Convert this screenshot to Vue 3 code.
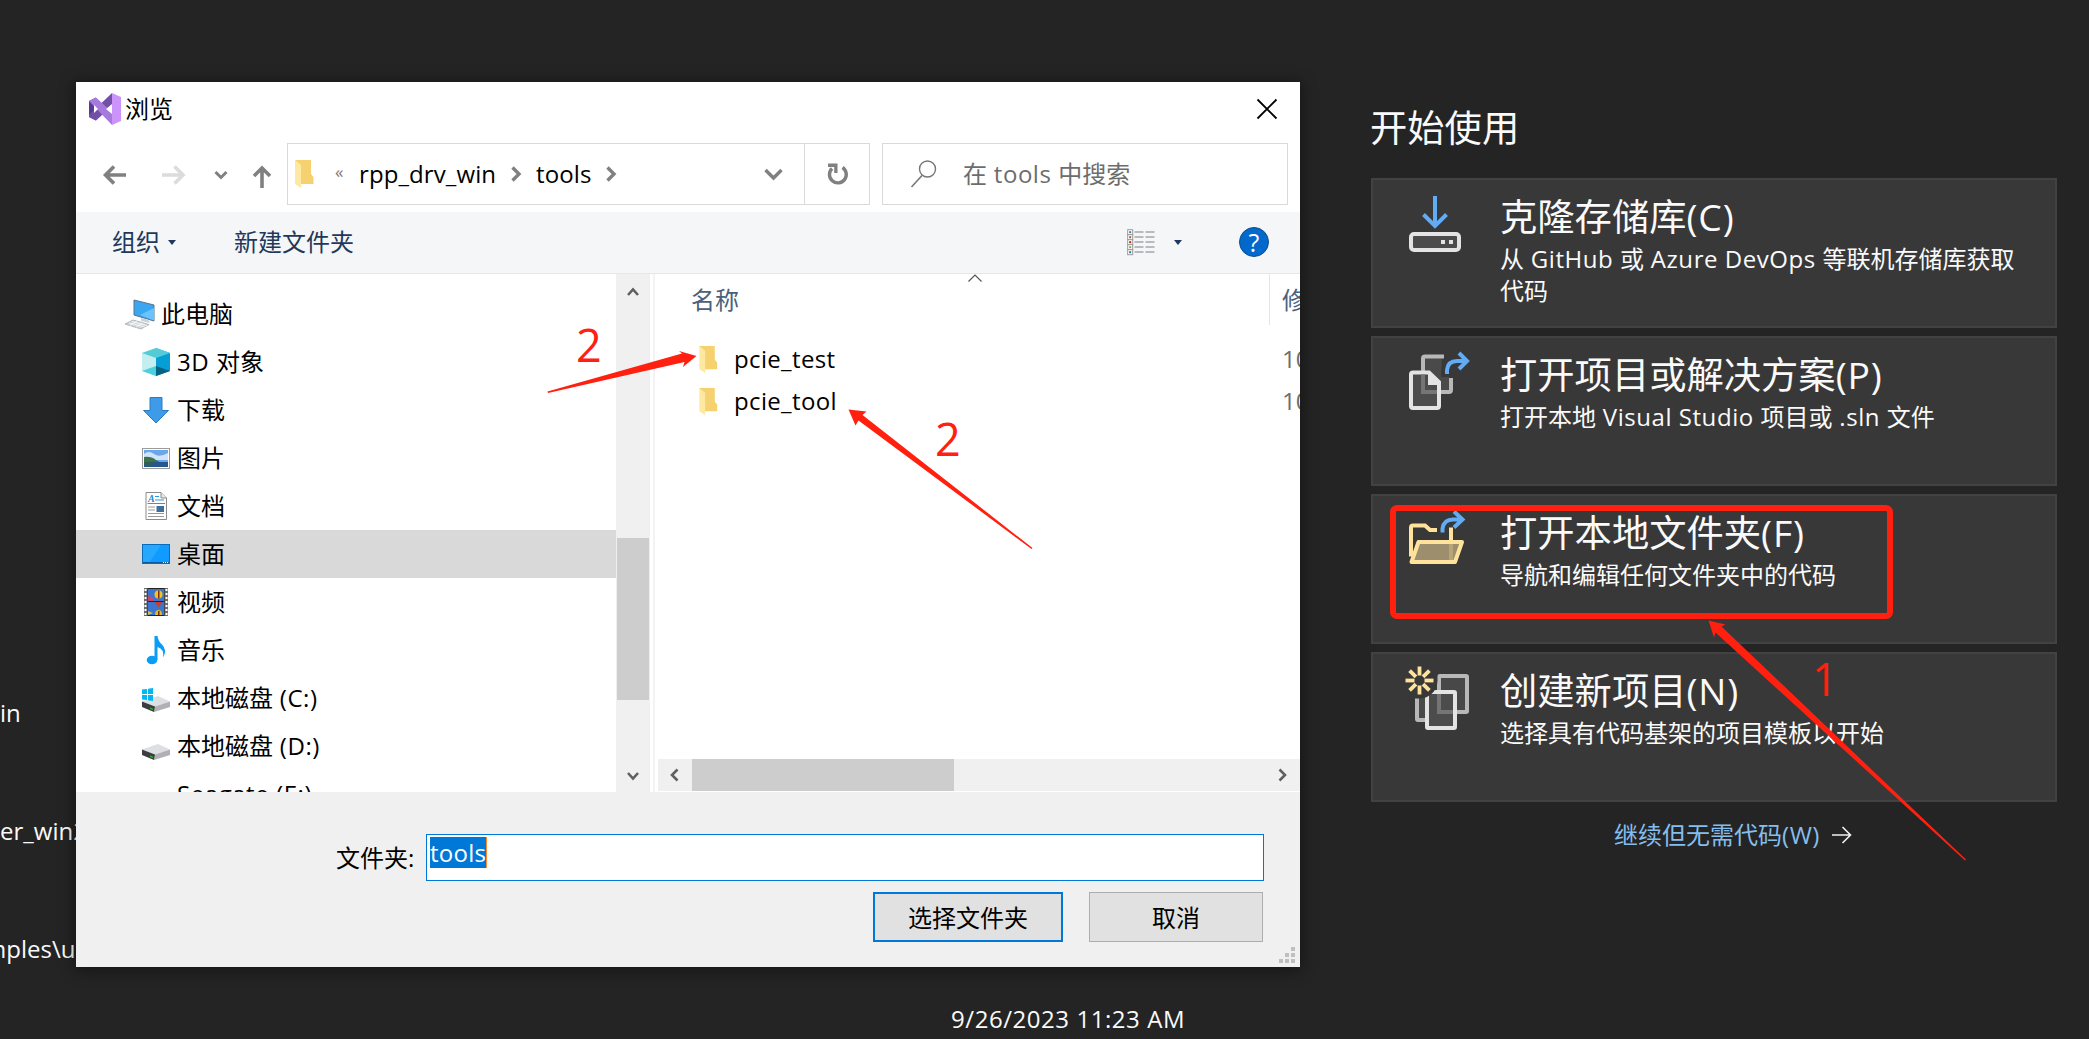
<script setup>
import { h } from 'vue'

// Splits mixed text into CJK and Latin runs so that Latin can be tracked separately.
const Mixed = (props) =>
  h(
    'span',
    { class: 'mixed' },
    props.text
      .split(/([\x20-\x7e]+)/)
      .filter(Boolean)
      .map((t) => (/[\x20-\x7e]/.test(t) ? h('span', { class: 'latin' }, t) : t))
  )
Mixed.props = ['text']

const recent = ['in', 'er_win2019', 'mples\\u']

const cards = [
  { icon: 'clone', title: '克隆存储库(C)', text: '从 GitHub 或 Azure DevOps 等联机存储库获取代码' },
  { icon: 'project', title: '打开项目或解决方案(P)', text: '打开本地 Visual Studio 项目或 .sln 文件' },
  { icon: 'folder', title: '打开本地文件夹(F)', text: '导航和编辑任何文件夹中的代码' },
  { icon: 'create', title: '创建新项目(N)', text: '选择具有代码基架的项目模板以开始' }
]

const places = [
  { icon: 'pc', name: '此电脑', root: true },
  { icon: 'cube', name: '3D 对象' },
  { icon: 'down', name: '下载' },
  { icon: 'picture', name: '图片' },
  { icon: 'doc', name: '文档' },
  { icon: 'desktop', name: '桌面', selected: true },
  { icon: 'video', name: '视频' },
  { icon: 'music', name: '音乐' },
  { icon: 'diskc', name: '本地磁盘 (C:)' },
  { icon: 'disk', name: '本地磁盘 (D:)' },
  { icon: '', name: 'Seagate (E:)' }
]

const files = ['pcie_test', 'pcie_tool']
const viewColors = ['#3d7ab8', '#b5552f', '#c11b17', '#7fa63a', '#2f6da8']
const rays = [0, 45, 90, 135, 180, 225, 270, 315]
</script>

<template>
  <div class="screen">
    <section class="recent">
      <div v-for="r in recent" :key="r" class="recent-path" :class="{ cut: r.startsWith('mples') }">{{ r }}</div>
      <div class="recent-date"><Mixed text="9/26/2023 11:23 AM" /></div>
    </section>

    <section class="start">
      <h1>开始使用</h1>
      <div class="cards">
        <div v-for="c in cards" :key="c.icon" class="card">
          <svg v-if="c.icon === 'clone'" class="card-icon" viewBox="-1 2 72 72">
            <path d="M27 4V33M15.500 22.500L27 34L38.500 22.500" fill="none" stroke="#62abf5" stroke-width="4" />
            <rect x="3" y="42" width="48" height="16" rx="3" fill="#4c4c4c" stroke="#e4e4e4" stroke-width="4" />
            <path d="M33 48h4v4h-4zM41 48h4v4h-4z" fill="#e4e4e4" />
          </svg>
          <svg v-else-if="c.icon === 'project'" class="card-icon" viewBox="-1 0 72 72">
            <path d="M17 6H34L33 25H41V38H17z" fill="#4a4a4a" />
            <path d="M36 4.500H17q-2 0-2 2V38q0 2 2 2H41q2 0 2-2V26" fill="none" stroke="#b8b8b8" stroke-width="4" />
            <path d="M3 22.500q0-2 2-2H21L31 30V54q0 2-2 2H5q-2 0-2-2z" fill="#4c4c4c" stroke="#e4e4e4" stroke-width="4" />
            <path d="M13 22.500H17V38H29V42H13z" fill="#757575" />
            <path d="M20 20L31 31V33H20z" fill="#e4e4e4" />
            <path d="M39 22V18Q40 9 49 9H58M51 1L59 9L51 17" fill="none" stroke="#62abf5" stroke-width="4" />
          </svg>
          <svg v-else-if="c.icon === 'folder'" class="card-icon" viewBox="-1 2.500 72 72">
            <path d="M3 49V20q0-2 2-2H17L22 22.500H29M43 20V34" fill="none" stroke="#ffe29b" stroke-width="4" />
            <path d="M10 35H54L48 54H4z" fill="#9d8f6d" />
            <path d="M41 35h4v19h-4z" fill="#b8a577" />
            <path d="M10.500 34.500H54L47 54.500H3.500z" fill="none" stroke="#ffe29b" stroke-width="4" stroke-linejoin="round" />
            <path d="M34.500 25V21Q36 12 45 12H54M46 4L54.500 12L46 20" fill="none" stroke="#62abf5" stroke-width="4" />
          </svg>
          <svg v-else class="card-icon" viewBox="-3 -1 72 72">
            <rect x="29" y="7" width="28" height="36" rx="1" fill="#484848" stroke="#b8b8b8" stroke-width="4" />
            <path d="M9 22H16V49H9z" fill="#4a4a4a" />
            <path d="M5.500 24V50q0 1 1 1H20" transform="translate(1.500 0)" fill="none" stroke="#b8b8b8" stroke-width="4" />
            <rect x="17" y="23" width="28" height="36" rx="1" fill="#4c4c4c" stroke="#e4e4e4" stroke-width="4" />
            <path d="M27 25H31V41H43V45H27z" fill="#757575" />
            <path d="M9.500 29.500A18 18 0 0 0 27.500 11.500V0H-8V29.500z" fill="#383838" />
            <g stroke="#ffe29b" stroke-width="3.800">
              <path v-for="a in rays" :key="a" d="M9.500 6.500V-2.500" :transform="`rotate(${a} 9.500 11.500)`" />
            </g>
          </svg>
          <div class="card-body">
            <h2><Mixed :text="c.title" /></h2>
            <p><Mixed :text="c.text" /></p>
          </div>
        </div>
      </div>
      <div class="skip">
        <Mixed text="继续但无需代码(W)" />
        <svg width="20" height="18" viewBox="0 0 20 18"><path d="M0 9H18.500M10.500 1L18.500 9L10.500 17" fill="none" stroke="#f0f0f0" stroke-width="1.600" /></svg>
      </div>
    </section>

    <section class="dialog">
      <header class="titlebar">
        <svg width="32" height="32" viewBox="0 0 32 32">
          <path d="M0 8L7 4.500L8 12L5 15.500V17L8 20L7 27.500L0 24z" fill="#5a3a92" />
          <path d="M7 27.500L23 13V0L0 22v2z" fill="#7350a8" />
          <path d="M7 4.500L26 22L23 32L0 8z" fill="#a679dc" />
          <path d="M23 0L32 4V28L23 32z" fill="#cc93fb" />
          <path d="M5 12L9 16L5 20zM23 11V21L17 16z" fill="#fff" />
        </svg>
        <span class="caption">浏览</span>
        <svg class="close" width="20" height="20" viewBox="0 0 20 20"><path d="M.500 .500L19.500 19.500M19.500 .500L.500 19.500" stroke="#000" stroke-width="1.800" /></svg>
      </header>

      <div class="navbar">
        <svg class="nav-icons" width="211" height="62" viewBox="0 0 211 62">
          <g fill="none" stroke="#808080" stroke-width="3.600">
            <path d="M50 32H29.500M38 23.500L29.500 32L38 40.500" />
            <path d="M86 32H107M98.500 23.500L107 32L98.500 40.500" stroke="#dcdcdc" />
            <path d="M139.500 29L145 34.500L150.500 29" stroke-width="3" />
            <path d="M186 45V25M178 33L186 25L194 33" />
          </g>
        </svg>
        <div class="address">
          <svg class="folder" width="19" height="28" viewBox="0 0 19 28"><path d="M0 0H16V14L18.500 17V24H5z" fill="#f5d26f" /><path d="M0 0L6 5V28L0 24z" fill="#ffe9a2" /></svg>
          <span class="more">«</span>
          <span class="crumb first">rpp_drv_win</span>
          <svg class="chev" width="10" height="16" viewBox="0 0 10 16"><path d="M1.500 1.500L8 8L1.500 14.500" /></svg>
          <span class="crumb second">tools</span>
          <svg class="chev last" width="10" height="16" viewBox="0 0 10 16"><path d="M1.500 1.500L8 8L1.500 14.500" /></svg>
          <svg class="chev history" width="19" height="13" viewBox="0 0 19 13"><path d="M1.500 2L9.500 10L17.500 2" /></svg>
          <div class="refresh">
            <svg width="22" height="24" viewBox="0 0 22 24"><path d="M15.500 5.500A8.400 8.400 0 1 1 5 6.500" fill="none" stroke="#808080" stroke-width="3.400" /><path d="M1 1.500H10.500V11H7.200V5H1z" fill="#808080" /></svg>
          </div>
        </div>
        <div class="search">
          <svg width="26" height="28" viewBox="0 0 26 28"><circle cx="16.500" cy="9" r="8" fill="none" stroke="#777" stroke-width="1.400" /><path d="M11 15.500L.500 27" stroke="#777" stroke-width="1.600" /></svg>
          <Mixed class="hint" text="在 tools 中搜索" />
        </div>
      </div>

      <div class="toolbar">
        <span class="organize">组织</span>
        <svg width="8" height="5" viewBox="0 0 8 5"><path d="M0 0H8L4 5z" fill="#1e395b" /></svg>
        <span class="newdir">新建文件夹</span>
        <svg class="view" width="28" height="27" viewBox="0 0 28 27">
          <g v-for="(c, i) in viewColors" :key="i">
            <rect x=".700" :y="i * 5 + 0.700" width="5" height="5" fill="#fff" stroke="#999" />
            <rect x="2.200" :y="i * 5 + 2.200" width="2" height="2" :fill="c" />
            <path :d="`M7.500 ${i * 5 + 3}H16.500M18.500 ${i * 5 + 3}H27.500`" stroke="#7b7f86" stroke-width="1.200" />
          </g>
        </svg>
        <svg width="8" height="5" viewBox="0 0 8 5"><path d="M0 0H8L4 5z" fill="#1e395b" /></svg>
        <div class="help">?</div>
      </div>

      <div class="content">
        <div class="tree">
          <div v-for="p in places" :key="p.name" class="place" :class="{ root: p.root, selected: p.selected }">
            <svg v-if="p.icon" class="place-icon" :class="p.icon" width="30" height="30" viewBox="0 0 30 30">
              <g v-if="p.icon === 'pc'">
                <path d="M9 1L29 6V22L9 16z" fill="#3aa7f0" stroke="#55748c" />
                <path d="M15 16L29 9V21.500z" fill="#69c3ff" />
                <path d="M16 19L23 20.500L25 24L16 22z" fill="#c9d3da" />
                <path d="M0 25L8 21L24 25.500L16 30z" fill="#d3d7da" stroke="#a5abb0" stroke-width=".800" />
                <path d="M4 24L20 28M7 22.500L22 26.500M5 26.500L12 22M11 28L18 24" stroke="#fff" stroke-width=".700" />
              </g>
              <g v-else-if="p.icon === 'cube'">
                <path d="M1 6L15 1V29L1 24z" fill="#c3eff0" /><path d="M29 6L15 1V29L29 24z" fill="#079ed5" />
                <path d="M1 6L15 1L29 6L15 11z" fill="#54ccd8" /><path d="M1 24L15 19V29z" fill="#4bd0dd" /><path d="M15 19L29 24L15 29z" fill="#066282" />
              </g>
              <path v-else-if="p.icon === 'down'" d="M9 2.500H21V15.500H27.500L15 28L2.500 15.500H9z" fill="#3e9be8" stroke="#2b7cc4" />
              <g v-else-if="p.icon === 'picture'">
                <rect x="1.500" y="5.500" width="27" height="20" fill="#fff" stroke="#9b9b9b" />
                <path d="M3 7H27V24H3z" fill="#6aa6e8" /><path d="M3 11Q8 7 13 11T27 10V17H3z" fill="#cfe4fa" />
                <path d="M3 14Q10 13 15 17T27 19H3z" fill="#3f7247" /><path d="M3 19H27V24H3z" fill="#27578c" /><path d="M3 19L16 20L8 22L3 21z" fill="#35633f" />
              </g>
              <g v-else-if="p.icon === 'doc'">
                <path d="M5 1.500H20L25.500 7V28.500H5z" fill="#fff" stroke="#8b8b8b" /><path d="M20 1.500V7H25.500" fill="#e8e8e8" stroke="#8b8b8b" />
                <path d="M14 5.500H18M14 9H23M6.500 12.500H24" stroke="#2c9add" stroke-width="1.200" />
                <path d="M7 16H14M7 19H14M7 22.500H23M7 25.500H23" stroke="#9a9a9a" /><path d="M15.500 15H23V21H15.500z" fill="#416f9d" />
                <text x="7" y="10.500" class="doc-a">A</text>
              </g>
              <g v-else-if="p.icon === 'desktop'">
                <rect x="1.500" y="5.500" width="27" height="19" fill="#0f9bff" stroke="#0b6dba" /><path d="M20 6H2V24H8z" fill="#27a8ff" />
                <path d="M2 23.500H28" stroke="#0a5b9d" /><path d="M22 23.500H27" stroke="#fff" stroke-dasharray="1 1" />
              </g>
              <g v-else-if="p.icon === 'video'">
                <path d="M3 1H27V29H3z" fill="#6b6b6b" /><path d="M4.500 2V29M25.500 2V29" stroke="#fff" stroke-width="2" stroke-dasharray="2 2" />
                <path d="M6.500 1H23.500V29H6.500z" fill="#222" /><path d="M7 2H23V14H7zM7 15H23V28H7z" fill="#3c74d2" />
                <circle cx="17.500" cy="7.500" r="4" fill="#f2c416" /><path d="M17 3.500h1.500v8H17z" fill="#8a2b1a" /><path d="M7 9L13 11V14H7z" fill="#c9476b" />
                <path d="M13.500 15H21.500L17.500 20z" fill="#d23b1f" /><path d="M14 28Q14 23 17.500 23T21 28z" fill="#e6bc1a" /><path d="M7 24L12 26L7 28z" fill="#d3c14b" /><path d="M17 24h1.500v4H17z" fill="#7a2a1a" />
              </g>
              <g v-else-if="p.icon === 'music'" fill="#0b9df5">
                <ellipse cx="11" cy="25" rx="5.300" ry="4.300" /><path d="M13.500 1H16.500Q17 6 21 9.500Q26.500 15 22 22.500Q23.500 14 16.500 12V25H13.500z" />
              </g>
              <g v-else>
                <path d="M1 18.500L17 13L29 18.500L14 23.500z" fill="#dedfe2" /><path d="M14 23.500L29 18.500V24L13 29z" fill="#b0b1b4" /><path d="M1 18.500L14 23.500L13 29L1 24z" fill="#3b3d3e" />
                <path d="M9 24.500L12 25.700V27L9 26z" fill="#24c12c" />
                <path v-if="p.icon === 'diskc'" d="M1 6.500L6 6V11H1zM7 5.800L12 5V11H7zM1 12H6V17L1 16.500zM7 12H12V18L7 17.200z" fill="#00b8ef" />
              </g>
            </svg>
            <span v-else class="place-icon blank"></span>
            <Mixed :text="p.name" />
          </div>
        </div>
        <div class="vscroll">
          <svg width="12" height="12" viewBox="0 0 12 12"><path d="M1 9L6 3.500L11 9" /></svg>
          <div class="vthumb"></div>
          <svg class="bottom" width="12" height="12" viewBox="0 0 12 12"><path d="M1 3L6 8.500L11 3" /></svg>
        </div>
        <div class="split"></div>
        <div class="files">
          <div class="columns">
            <span class="col-name">名称</span>
            <span class="col-date">修改日期</span>
            <svg class="sort" width="14" height="8" viewBox="0 0 14 8"><path d="M.500 7.500L7 1L13.500 7.500" fill="none" stroke="#555" stroke-width="1.200" /></svg>
          </div>
          <div class="rows">
            <div v-for="f in files" :key="f" class="file">
              <svg class="folder" width="19" height="27" viewBox="0 0 19 28"><path d="M0 0H16V14L18.500 17V24H5z" fill="#f5d26f" /><path d="M0 0L6 5V28L0 24z" fill="#ffe9a2" /></svg>
              <span class="file-name">{{ f }}</span>
              <span class="file-date">10/12/2023</span>
            </div>
          </div>
          <div class="hscroll">
            <svg width="12" height="12" viewBox="0 0 12 12"><path d="M8.500 .500L3 6L8.500 11.500" /></svg>
            <div class="hthumb"></div>
            <svg class="right" width="12" height="12" viewBox="0 0 12 12"><path d="M3.500 .500L9 6L3.500 11.500" /></svg>
          </div>
        </div>
      </div>

      <footer class="footer">
        <div class="field">
          <label>文件夹:</label>
          <div class="input"><span>tools</span></div>
        </div>
        <div class="buttons">
          <div class="button primary">选择文件夹</div>
          <div class="button">取消</div>
        </div>
        <svg class="grip" width="16" height="16" viewBox="0 0 16 16"><path d="M12 0h4v4h-4zM6 6h4v4h-4zM12 6h4v4h-4zM0 12h4v4h-4zM6 12h4v4h-4zM12 12h4v4h-4z" fill="#bfbfbf" /></svg>
      </footer>
    </section>

    <svg class="marks" viewBox="0 0 2089 1039">
      <rect x="1393" y="508" width="497" height="108" rx="4" fill="none" stroke="#ff2010" stroke-width="6" />
      <g fill="#ff2010">
        <path d="M547.500 391.500L682 353.500L679 351L696.500 356L683 367L684.500 362L548 393z" />
        <path d="M848.500 409.500L866.500 411.500L862.500 415L1032.500 548L1031.500 549L858.500 420.500L855.500 425.500z" />
        <path d="M1708.500 620.500L1725.500 624.500L1721.500 626.500L1966 859.500L1965 860.500L1715.500 632.500L1714 637.500z" />
        <text x="576" y="362">2</text>
        <text x="935" y="456">2</text>
        <text x="1812" y="696">1</text>
      </g>
    </svg>
  </div>
</template>

<style>
html,
body {
  margin: 0;
  background: #242424;
}
.latin { letter-spacing: .023em; }
</style>

<style scoped>
.screen {
  position: relative;
  display: flex;
  width: 2089px;
  height: 1039px;
  overflow: hidden;
  background: #242424;
  color: #fafafa;
  font: 24px/32px "Open Sans", "Noto Sans CJK SC", sans-serif;
}
.screen * { box-sizing: border-box; }
svg { flex: none; overflow: visible; }
span { white-space: nowrap; }
p .mixed { white-space: normal; }

.recent {
  width: 1371px;
  padding-top: 697px;
}
.recent-path {
  height: 118px;
  white-space: nowrap;
}
.recent-path.cut { height: 118px; margin-left: -16px; }
.recent-date {
  margin: -48px 0 0 951px;
}

.start { width: 686px; padding-top: 102px; }
h1, h2, p { margin: 0; font-weight: 400; }
h1 { margin-left: -1px; font-size: 37.300px; line-height: 52px; height: 76px; }
.cards { display: flex; flex-direction: column; gap: 8px; }
.card {
  display: flex;
  height: 150px;
  padding: 12px 28px 0 34px;
  background: #383838;
  border: 2px solid #424242;
}
.card-icon { width: 72px; height: 72px; margin-top: 2px; }
.card-body { margin-left: 21px; width: 530px; }
h2 { font-size: 37.300px; line-height: 50px; height: 51px; }
p { line-height: 32px; }
.skip {
  display: flex;
  align-items: center;
  gap: 12px;
  margin: 17px 0 0 243px;
  color: #84beed;
}

.dialog {
  position: absolute;
  left: 76px;
  top: 82px;
  width: 1224px;
  height: 885px;
  display: flex;
  flex-direction: column;
  background: #fff;
  color: #000;
  box-shadow: 0 2px 14px 2px rgba(0, 0, 0, .4);
}
.titlebar { display: flex; align-items: center; height: 61px; padding: 0 23px 7px 13px; }
.caption { margin-left: 4px; }
.close { margin-left: auto; }
.navbar { display: flex; height: 69px; }
.address {
  display: flex;
  align-items: center;
  width: 583px;
  height: 62px;
  border: 1px solid #d9d9d9;
}
.address .folder { margin: 0 0 0 7px; }
.more { width: 10px; margin: -5px 0 0 21px; color: #777; font-size: 17px; }
.crumb { letter-spacing: .1px; }
.first { margin-left: 14px; width: 138px; }
.chev { margin-left: 14px; fill: none; stroke: #808080; stroke-width: 3.4; }
.second { margin-left: 15px; width: 56px; }
.chev.history { margin-left: auto; margin-right: 21px; }
.refresh { display: flex; align-items: center; justify-content: center; width: 65px; height: 60px; padding-left: 2px; border-left: 1px solid #d9d9d9; }
.search {
  display: flex;
  align-items: center;
  width: 406px;
  height: 62px;
  margin-left: 12px;
  padding-left: 28px;
  border: 1px solid #d9d9d9;
  color: #6d6d6d;
}
.search .hint { margin-left: 26px; }
.toolbar {
  display: flex;
  align-items: center;
  height: 62px;
  padding: 0 31px 1px 36px;
  background: #f5f6f7;
  border-bottom: 1px solid #e6e7e8;
  color: #1e395b;
}
.organize { margin-right: 8px; }
.newdir { margin-left: 58px; }
.view { margin: 0 19px 0 auto; }
.help {
  width: 30px;
  height: 30px;
  margin-left: 57px;
  border: 1px solid #0b4f8f;
  border-radius: 50%;
  background: #0069cb;
  color: #fff;
  font-size: 25px;
  line-height: 28px;
  text-align: center;
}
.content { display: flex; height: 518px; }
.tree { width: 540px; height: 518px; padding-top: 16px; overflow: hidden; }
.place { display: flex; align-items: center; height: 48px; padding-left: 65px; }
.place.root { padding-left: 49px; }
.place.selected { background: #d9d9d9; }
.place-icon { width: 30px; margin-right: 6px; }
.doc-a { font: italic bold 10px "Liberation Serif", serif; fill: #1d87cf; }
.vscroll {
  display: flex;
  flex-direction: column;
  align-items: center;
  width: 34px;
  margin-left: 0;
  padding: 12px 1px 10px;
  background: #f0f0f0;
}
.vscroll path, .hscroll path { fill: none; stroke: #606060; stroke-width: 2.6; }
.vthumb { width: 32px; height: 162px; margin-top: 240px; background: #cdcdcd; }
.vscroll .bottom { margin-top: auto; }
.split { width: 8px; border-left: 3px solid #fff; border-right: 3px solid #fff; background: #f3f3f3; }
.files { display: flex; flex-direction: column; width: 642px; }
.columns { position: relative; display: flex; height: 51px; overflow: hidden; color: #4c607a; line-height: 52px; }
.col-name { width: 612px; padding-left: 33px; border-right: 1px solid #e5e5e5; flex: none; }
.col-date { padding-left: 12px; }
.sort { position: absolute; left: 310px; top: 0; }
.rows { height: 434px; padding-top: 13px; overflow: hidden; }
.file { display: flex; align-items: center; height: 42px; padding-left: 41px; }
.file-name { width: 548px; margin-left: 16px; flex: none; letter-spacing: .35px; }
.file-date { color: #6d6d6d; }
.hscroll { display: flex; align-items: center; height: 32px; padding: 0 12px 0 11px; background: #f0f0f0; }
.hthumb { width: 262px; height: 32px; margin-left: 11px; background: #cdcdcd; }
.hscroll .right { margin-left: auto; }
.footer { position: relative; height: 175px; padding-top: 42px; background: #f0f0f0; }
.field { display: flex; height: 50px; padding-left: 260px; }
label { width: 90px; line-height: 48px; }
.input { width: 838px; height: 47px; padding: 2px 3px; border: 1px solid #0078d7; background: #fff; line-height: 31px; }
.input span { display: inline-block; height: 31px; background: #0078d7; border-right: 1px solid #ff8a28; color: #fff; line-height: 31px; letter-spacing: .25px; }
.buttons { display: flex; gap: 26px; margin: 8px 0 0 797px; }
.button { width: 174px; height: 50px; border: 1px solid #adadad; background: #e1e1e1; line-height: 50px; text-align: center; }
.button.primary { width: 190px; border: 2px solid #0078d7; line-height: 48px; }
.grip { position: absolute; right: 5px; bottom: 4px; }

.marks { position: absolute; left: 0; top: 0; width: 2089px; height: 1039px; pointer-events: none; }
.marks text { font: 45px "Open Sans", sans-serif; }
</style>
